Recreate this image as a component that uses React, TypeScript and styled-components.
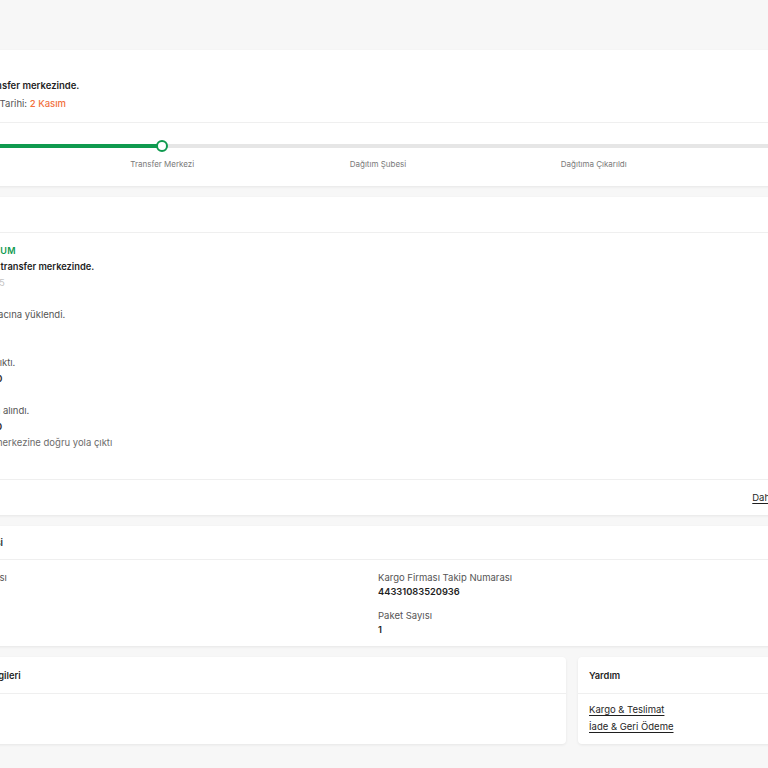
import React from "react";
import styled, { createGlobalStyle } from "styled-components";

const GlobalStyle = createGlobalStyle`
  html, body {
    margin: 0;
    padding: 0;
    background: #f7f7f7;
  }
  body {
    font-family: Inter, "Noto Sans", "Liberation Sans", sans-serif;
    color: #1f1f1f;
    -webkit-font-smoothing: antialiased;
  }
`;

const GREEN = "#0f9a4f";
const ORANGE = "#f2703c";

const Viewport = styled.div`
  width: 768px;
  height: 768px;
  overflow: hidden;
  background: #f7f7f7;
`;

const Page = styled.main`
  width: 884px;
  margin-left: -64px;
  padding: 50px 0 24px;
  display: flex;
  flex-direction: column;
  gap: 11px;
`;

const Card = styled.section`
  background: #fff;
  border-radius: 4px;
  box-shadow: 0 1px 3px rgba(0, 0, 0, 0.07);
`;

const CardHeader = styled.header<{ $h?: number }>`
  height: ${(p) => p.$h ?? 36}px;
  box-sizing: border-box;
  display: flex;
  align-items: center;
  padding: 0 11px;
  border-bottom: 1px solid #efefef;
  font-size: 9.3px;
  font-weight: 600;
  color: #1f1f1f;
  white-space: nowrap;
`;

/* ---- shipment summary ---- */

const Summary = styled.div`
  padding: 29px 11px 11px 12px;
  border-bottom: 1px solid #efefef;
`;

const Headline = styled.div`
  font-size: 9.5px;
  line-height: 14px;
  font-weight: 600;
  color: #1f1f1f;
  white-space: nowrap;
`;

const EtaLine = styled.div`
  margin-top: 4px;
  font-size: 9.5px;
  line-height: 14px;
  color: #555;
  white-space: nowrap;
`;

const EtaDate = styled.span`
  color: ${ORANGE};
  font-weight: 500;
`;

/* ---- progress steps ---- */

const StepsSection = styled.div`
  padding: 17px 10.5px 16px;
`;

const StepList = styled.ol`
  position: relative;
  list-style: none;
  margin: 0;
  padding: 0;
  display: flex;
  justify-content: space-between;
`;

const RailTrack = styled.div`
  position: absolute;
  left: 0;
  right: 0;
  top: 4px;
  height: 4px;
  border-radius: 2px;
  background: #e6e6e6;
`;

const RailFill = styled.div`
  position: absolute;
  left: 0;
  top: 4px;
  height: 4px;
  border-radius: 2px;
  background: ${GREEN};
`;

const Step = styled.li`
  position: relative;
  width: 0;
  display: flex;
  flex-direction: column;
  align-items: center;
`;

const DotSlot = styled.div`
  height: 12px;
  display: flex;
  align-items: center;
`;

const Dot = styled.span<{ $current: boolean }>`
  display: ${(p) => (p.$current ? "block" : "none")};
  width: 12px;
  height: 12px;
  box-sizing: border-box;
  border-radius: 50%;
  background: #fff;
  border: 2.5px solid ${GREEN};
`;

const StepLabel = styled.span`
  margin-top: 6px;
  font-size: 8px;
  line-height: 12px;
  color: #7a7a7a;
  white-space: nowrap;
`;

/* ---- movement history ---- */

const Timeline = styled.ul`
  list-style: none;
  margin: 0;
  padding: 10px 11px 28px 13px;
`;

const Entry = styled.li`
  display: flex;
  flex-direction: column;
`;

const EntryTag = styled.div<{ $live?: boolean }>`
  font-size: 9px;
  line-height: 16px;
  font-weight: 600;
  letter-spacing: 0.3px;
  color: ${(p) => (p.$live ? GREEN : "#b5b5b5")};
  white-space: nowrap;
`;

const EntryText = styled.div<{ $strong?: boolean }>`
  font-size: ${(p) => (p.$strong ? 9.3 : 9.5)}px;
  line-height: 16px;
  font-weight: ${(p) => (p.$strong ? 600 : 400)};
  color: ${(p) => (p.$strong ? "#1f1f1f" : "#555")};
  white-space: nowrap;
`;

const EntryMeta = styled.div<{ $muted?: boolean }>`
  font-size: ${(p) => (p.$muted ? 9.5 : 9.3)}px;
  line-height: 16px;
  font-weight: ${(p) => (p.$muted ? 400 : 600)};
  color: ${(p) => (p.$muted ? "#c4c4c4" : "#2a2a2a")};
  white-space: nowrap;
`;

const EntryNote = styled.div`
  font-size: 9.5px;
  line-height: 16px;
  color: #6b6b6b;
  white-space: nowrap;
`;

const CardFooter = styled.footer`
  height: 36px;
  box-sizing: border-box;
  border-top: 1px solid #efefef;
  display: flex;
  align-items: center;
  justify-content: flex-end;
  padding: 0 11px;
`;

const TextLink = styled.a`
  font-size: 9.5px;
  line-height: 17px;
  color: #1f1f1f;
  text-decoration: underline;
  text-underline-offset: 2px;
  white-space: nowrap;
  cursor: pointer;
`;

/* ---- shipment details ---- */

const DetailGrid = styled.div`
  display: grid;
  grid-template-columns: 1fr 1fr;
  padding: 11px 11px 9px;
`;

const FieldColumn = styled.div`
  display: flex;
  flex-direction: column;
  gap: 10px;
`;

const Field = styled.div`
  display: flex;
  flex-direction: column;
`;

const FieldLabel = styled.span`
  font-size: 9.5px;
  line-height: 14px;
  color: #555;
  white-space: nowrap;
`;

const FieldValue = styled.span`
  font-size: 9.3px;
  line-height: 14px;
  font-weight: 600;
  color: #1f1f1f;
  white-space: nowrap;
`;

/* ---- bottom row ---- */

const BottomRow = styled.div`
  display: grid;
  grid-template-columns: 1fr 242px;
  gap: 12px;
`;

const LinkList = styled.div`
  display: flex;
  flex-direction: column;
  align-items: flex-start;
  padding: 7px 11px 9px;
`;

const AddressLine = styled.span`
  font-size: 9.5px;
  line-height: 17px;
  color: #555;
  white-space: nowrap;
`;

const steps = [
  "Kargoya Verildi",
  "Transfer Merkezi",
  "Dağıtım Şubesi",
  "Dağıtıma Çıkarıldı",
  "Teslim Edildi",
];
const currentStep = 1;

type Movement = {
  tag: string;
  live?: boolean;
  text: string;
  strong?: boolean;
  meta: string;
  mutedMeta?: boolean;
  note?: string;
};

const movements: Movement[] = [
  {
    tag: "ANLIK DURUM",
    live: true,
    text: "Gönderiniz transfer merkezinde.",
    strong: true,
    meta: "Bugün 09:15",
    mutedMeta: true,
  },
  { tag: "1 KASIM", text: "Transfer aracına yüklendi.", meta: "Bursa" },
  { tag: "1 KASIM", text: "Bölgeden çıktı.", meta: "Bursa 18:40" },
  {
    tag: "31 EKİM",
    text: "Ürün kayda alındı.",
    meta: "Bursa 16:20",
    note: "İl transfer merkezine doğru yola çıktı",
  },
];

export default function App() {
  const fill = (currentStep / (steps.length - 1)) * 100;
  return (
    <Viewport>
      <GlobalStyle />
      <Page>
        <Card>
          <Summary>
            <Headline>Kargon transfer merkezinde.</Headline>
            <EtaLine>
              Son Teslim Tarihi: <EtaDate>2 Kasım</EtaDate>
            </EtaLine>
          </Summary>
          <StepsSection>
            <StepList>
              <RailTrack />
              <RailFill style={{ width: `${fill}%` }} />
              {steps.map((s, i) => (
                <Step key={s}>
                  <DotSlot>
                    <Dot $current={i === currentStep} />
                  </DotSlot>
                  <StepLabel>{s}</StepLabel>
                </Step>
              ))}
            </StepList>
          </StepsSection>
        </Card>

        <Card>
          <CardHeader $h={36}>Geçmiş</CardHeader>
          <Timeline>
            {movements.map((m, i) => (
              <Entry key={i}>
                <EntryTag $live={m.live}>{m.tag}</EntryTag>
                <EntryText $strong={m.strong}>{m.text}</EntryText>
                <EntryMeta $muted={m.mutedMeta}>{m.meta}</EntryMeta>
                {m.note && <EntryNote>{m.note}</EntryNote>}
              </Entry>
            ))}
          </Timeline>
          <CardFooter>
            <TextLink>Daha Fazlası</TextLink>
          </CardFooter>
        </Card>

        <Card>
          <CardHeader $h={34}>Kargo Bilgisi</CardHeader>
          <DetailGrid>
            <FieldColumn>
              <Field>
                <FieldLabel>Kargo firması</FieldLabel>
                <FieldValue>Yurtiçi</FieldValue>
              </Field>
              <Field>
                <FieldLabel>Desi</FieldLabel>
                <FieldValue>2</FieldValue>
              </Field>
            </FieldColumn>
            <FieldColumn>
              <Field>
                <FieldLabel>Kargo Firması Takip Numarası</FieldLabel>
                <FieldValue>44331083520936</FieldValue>
              </Field>
              <Field>
                <FieldLabel>Paket Sayısı</FieldLabel>
                <FieldValue>1</FieldValue>
              </Field>
            </FieldColumn>
          </DetailGrid>
        </Card>

        <BottomRow>
          <Card>
            <CardHeader $h={37}>Teslimat Bilgileri</CardHeader>
            <LinkList>
              <AddressLine>Ev Adresi</AddressLine>
              <AddressLine>İstanbul</AddressLine>
            </LinkList>
          </Card>
          <Card>
            <CardHeader $h={37}>Yardım</CardHeader>
            <LinkList>
              <TextLink>Kargo &amp; Teslimat</TextLink>
              <TextLink>İade &amp; Geri Ödeme</TextLink>
            </LinkList>
          </Card>
        </BottomRow>
      </Page>
    </Viewport>
  );
}
